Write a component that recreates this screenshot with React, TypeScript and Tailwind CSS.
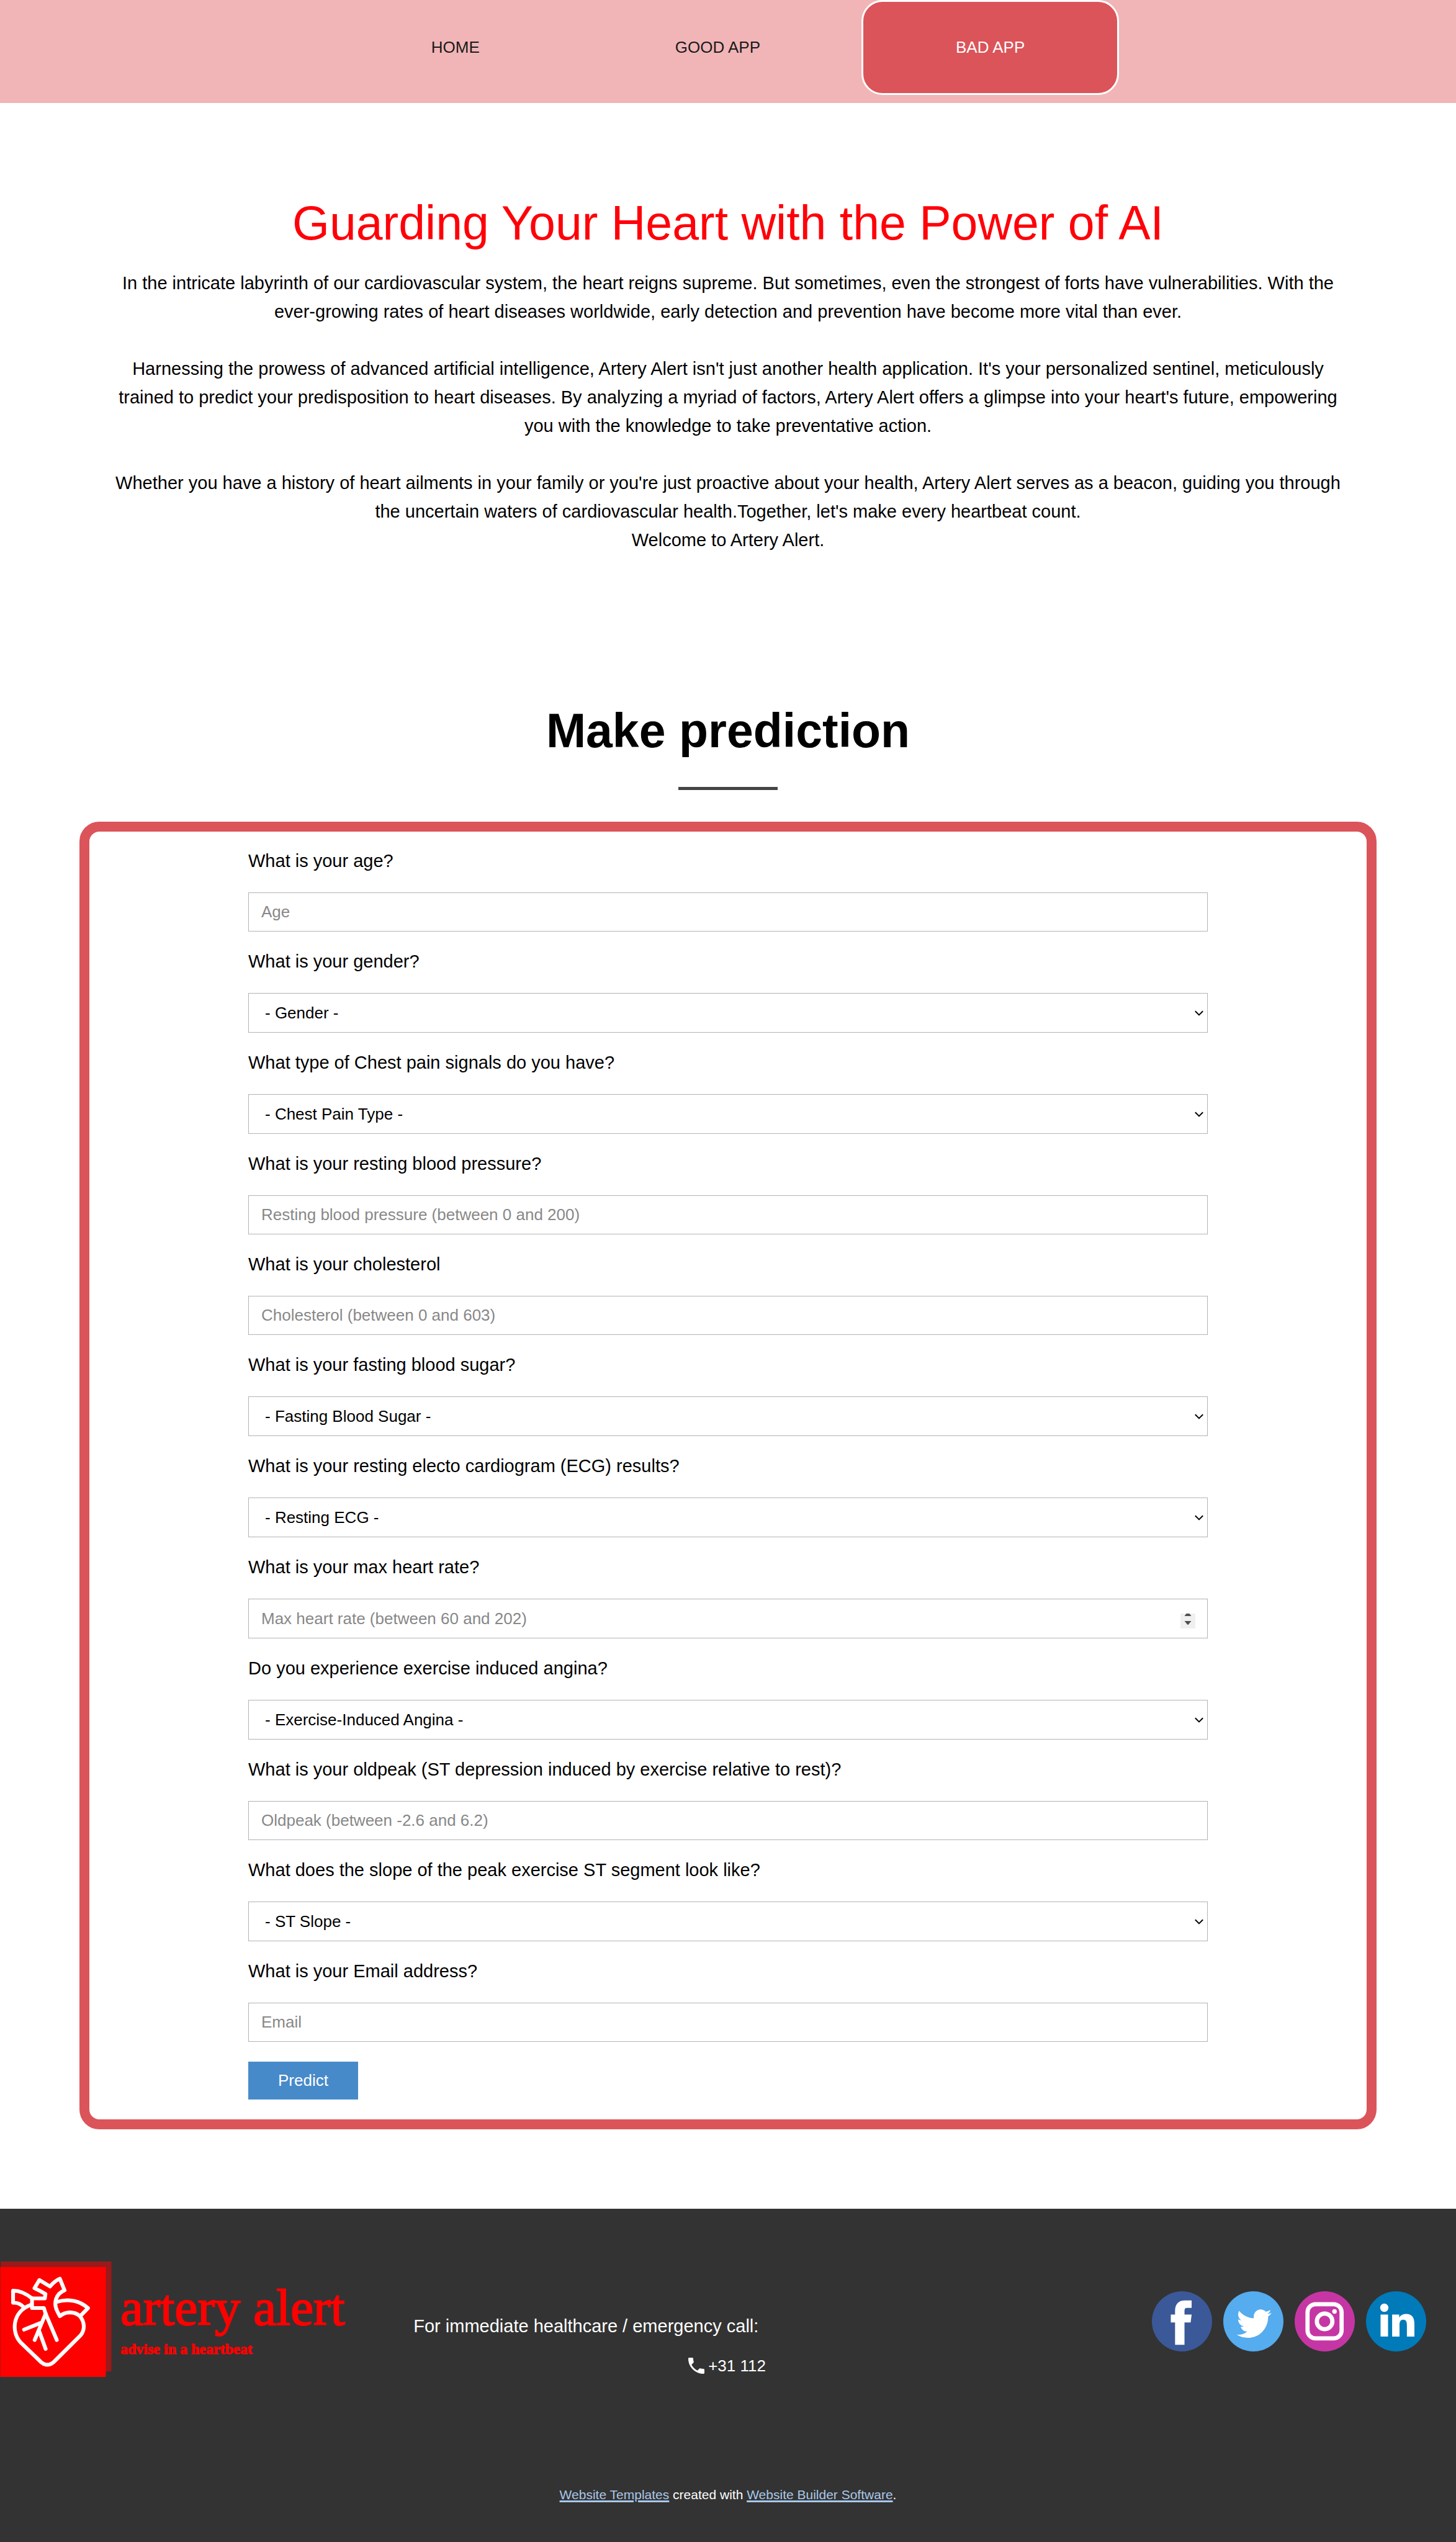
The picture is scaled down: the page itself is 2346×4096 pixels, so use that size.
import { Fragment } from "react";

type Field = {
  id: string;
  label: string;
  kind: "text" | "number" | "email" | "select";
  hint: string;
  options?: string[];
};

const fields: Field[] = [
  { id: "age", label: "What is your age?", kind: "text", hint: "Age" },
  { id: "gender", label: "What is your gender?", kind: "select", hint: "- Gender -", options: ["Male", "Female"] },
  {
    id: "chest-pain",
    label: "What type of Chest pain signals do you have?",
    kind: "select",
    hint: "- Chest Pain Type -",
    options: ["Typical Angina", "Atypical Angina", "Non-Anginal Pain", "Asymptomatic"],
  },
  {
    id: "blood-pressure",
    label: "What is your resting blood pressure?",
    kind: "text",
    hint: "Resting blood pressure (between 0 and 200)",
  },
  { id: "cholesterol", label: "What is your cholesterol", kind: "text", hint: "Cholesterol (between 0 and 603)" },
  {
    id: "blood-sugar",
    label: "What is your fasting blood sugar?",
    kind: "select",
    hint: "- Fasting Blood Sugar -",
    options: ["Above 120 mg/dl", "Below 120 mg/dl"],
  },
  {
    id: "resting-ecg",
    label: "What is your resting electo cardiogram (ECG) results?",
    kind: "select",
    hint: "- Resting ECG -",
    options: ["Normal", "ST", "LVH"],
  },
  { id: "max-hr", label: "What is your max heart rate?", kind: "number", hint: "Max heart rate (between 60 and 202)" },
  {
    id: "angina",
    label: "Do you experience exercise induced angina?",
    kind: "select",
    hint: "- Exercise-Induced Angina -",
    options: ["Yes", "No"],
  },
  {
    id: "oldpeak",
    label: "What is your oldpeak (ST depression induced by exercise relative to rest)?",
    kind: "text",
    hint: "Oldpeak (between -2.6 and 6.2)",
  },
  {
    id: "st-slope",
    label: "What does the slope of the peak exercise ST segment look like?",
    kind: "select",
    hint: "- ST Slope -",
    options: ["Up", "Flat", "Down"],
  },
  { id: "email", label: "What is your Email address?", kind: "email", hint: "Email" },
];

const navItems = [
  { label: "HOME", active: false },
  { label: "GOOD APP", active: false },
  { label: "BAD APP", active: true },
];

const paragraphs = [
  ["In the intricate labyrinth of our cardiovascular system, the heart reigns supreme. But sometimes, even the strongest of forts have vulnerabilities. With the ever-growing rates of heart diseases worldwide, early detection and prevention have become more vital than ever."],
  ["Harnessing the prowess of advanced artificial intelligence, Artery Alert isn't just another health application. It's your personalized sentinel, meticulously trained to predict your predisposition to heart diseases. By analyzing a myriad of factors, Artery Alert offers a glimpse into your heart's future, empowering you with the knowledge to take preventative action."],
  [
    "Whether you have a history of heart ailments in your family or you're just proactive about your health, Artery Alert serves as a beacon, guiding you through the uncertain waters of cardiovascular health.Together, let's make every heartbeat count.",
    "Welcome to Artery Alert.",
  ],
];

function NavBar() {
  return (
    <header className="bg-[#f1b5b7] pb-[13px]">
      <nav className="flex justify-center gap-[11px]">
        {navItems.map((item) => (
          <a
            key={item.label}
            href="#"
            className={
              item.active
                ? "flex h-[153px] items-center rounded-[34px] border-[3px] border-white bg-[#db545a] px-[149px] text-[26px] text-white"
                : "flex h-[153px] items-center border-[3px] border-transparent px-[149px] text-[26px] text-[#1a1a1a]"
            }
          >
            {item.label}
          </a>
        ))}
      </nav>
    </header>
  );
}

function FieldControl({ field }: { field: Field }) {
  if (field.kind === "select") {
    return (
      <div className="relative">
        <select
          id={field.id}
          defaultValue=""
          className="block h-16 w-full appearance-none rounded-none border border-[#b3b3b3] bg-white pr-12 pl-[26px] text-[26px] text-black"
        >
          <option value="">{field.hint}</option>
          {field.options?.map((o) => (
            <option key={o} value={o}>
              {o}
            </option>
          ))}
        </select>
        <svg
          viewBox="0 0 14 9"
          className="pointer-events-none absolute top-[28px] right-[7px] h-[9px] w-[14px]"
          fill="none"
          stroke="#000"
          strokeWidth="2"
        >
          <path d="M0.8 1.2 L7 7.4 L13.2 1.2" />
        </svg>
      </div>
    );
  }
  if (field.kind === "number") {
    return (
      <div className="relative">
        <input
          id={field.id}
          type="number"
          placeholder={field.hint}
          className="block h-16 w-full border border-[#b3b3b3] bg-white px-5 text-[26px] text-black [appearance:textfield] placeholder:text-[#888888] [&::-webkit-inner-spin-button]:appearance-none"
        />
        <svg viewBox="0 0 24 24" className="pointer-events-none absolute top-[24px] right-[20px] size-6">
          <rect width="24" height="24" fill="#f0f0f0" />
          <path d="M9.5 0 H14.5 L17.5 4 H6.5 Z" fill="#505050" />
          <path d="M6.5 12 H17.5 L12.5 18 H11.5 Z" fill="#505050" />
        </svg>
      </div>
    );
  }
  return (
    <input
      id={field.id}
      type={field.kind}
      placeholder={field.hint}
      className="block h-[63px] w-full border border-[#b3b3b3] bg-white px-5 text-[26px] text-black placeholder:text-[#888888]"
    />
  );
}

function PredictionForm() {
  return (
    <form
      className="mx-32 rounded-[32px] border-[16px] border-[#db545a] px-64 pt-6 pb-8"
      onSubmit={(e) => e.preventDefault()}
    >
      <div className="flex flex-col gap-[25px]">
        {fields.map((field) => (
          <div key={field.id} className="flex flex-col gap-7">
            <label htmlFor={field.id} className="text-[29px] leading-[46px]">
              {field.label}
            </label>
            <FieldControl field={field} />
          </div>
        ))}
      </div>
      <button type="submit" className="mt-8 h-[61px] bg-[#478ac9] px-12 text-[26px] text-white">
        Predict
      </button>
    </form>
  );
}

function HeartLogo() {
  return (
    <svg viewBox="0 24 588 610" className="h-[186px] w-[180px] shrink-0">
      <rect x="3" y="24" width="585" height="581" fill="#991a1a" />
      <rect x="0" y="53" width="558" height="581" fill="#ff0000" />
      <g fill="none" stroke="#fff" strokeWidth="20" strokeLinecap="round" strokeLinejoin="round">
        <path d="M168 219 H236 L239 196 Q210 178 181 165 L207 122 L263 156 Q286 128 315 115 L340 176 C296 194 278 240 302 288 L315 313 C345 287 392 287 420 312 C448 345 448 385 425 414 L291 547 C266 577 232 577 207 547 L108 452 C58 400 62 290 160 254" />
        <path d="M302 237 C360 219 420 232 464 270 L428 307" />
        <path d="M168 219 C140 196 110 178 68 178 V242 C90 241 106 247 121 262" />
        <path d="M168 219 V270 H231 L240 300 L299 439" />
        <path d="M240 300 L182 439" />
        <path d="M126 384 L213 349" />
        <path d="M206 392 L240 486" />
      </g>
    </svg>
  );
}

function SocialLinks() {
  return (
    <div className="mt-12 mr-12 ml-auto flex gap-[18px]">
      <a href="#" aria-label="Facebook">
        <svg viewBox="0 0 106 106" className="size-[97px]">
          <circle cx="53" cy="53" r="53" fill="#3b5998" />
          <path
            fill="#fff"
            d="M70 16 V29.3 H62 Q57.4 29.3 57.4 34 V41 H70 L68.2 55 H57.4 V94.3 H40.8 V55 H33.3 V41 H40.8 V34 C40.8 22.5 47 16 58 16 Z"
          />
        </svg>
      </a>
      <a href="#" aria-label="Twitter">
        <svg viewBox="0 0 106 106" className="size-[97px]">
          <circle cx="53" cy="53" r="53" fill="#55acee" />
          <path
            fill="#fff"
            transform="translate(23.7 26.2) scale(2.5625)"
            d="M23.953 4.57a10 10 0 01-2.825.775 4.958 4.958 0 002.163-2.723c-.951.555-2.005.959-3.127 1.184a4.92 4.92 0 00-8.384 4.482C7.69 8.095 4.067 6.13 1.64 3.162a4.822 4.822 0 00-.666 2.475c0 1.71.87 3.213 2.188 4.096a4.904 4.904 0 01-2.228-.616v.06a4.923 4.923 0 003.946 4.827 4.996 4.996 0 01-2.212.085 4.936 4.936 0 004.604 3.417 9.867 9.867 0 01-6.102 2.105c-.39 0-.779-.023-1.17-.067a13.995 13.995 0 007.557 2.209c9.053 0 13.998-7.496 13.998-13.985 0-.21 0-.42-.015-.63A9.935 9.935 0 0024 4.59z"
          />
        </svg>
      </a>
      <a href="#" aria-label="Instagram">
        <svg viewBox="0 0 106 106" className="size-[97px]">
          <circle cx="53" cy="53" r="53" fill="#c536a4" />
          <g fill="none" stroke="#fff" strokeWidth="7.4">
            <rect x="22.7" y="22.7" width="60" height="60.3" rx="14" />
            <circle cx="52.8" cy="53" r="13.7" />
          </g>
          <circle cx="70.2" cy="35.5" r="4" fill="#fff" />
        </svg>
      </a>
      <a href="#" aria-label="LinkedIn">
        <svg viewBox="0 0 106 106" className="size-[97px]">
          <circle cx="53" cy="53" r="53" fill="#007ab9" />
          <g fill="#fff">
            <circle cx="32.2" cy="29" r="7.3" />
            <rect x="25.6" y="41" width="13.2" height="38.7" />
            <path d="M46 41 H58.4 V46.3 Q62 40 71 40 C81 40 85.2 47 85.2 57 V79.7 H72 V61 C72 54 71 50 65.5 50 C60 50 59 54.5 59 60 V79.7 H46 Z" />
          </g>
        </svg>
      </a>
    </div>
  );
}

function Footer() {
  return (
    <footer className="mt-32 bg-[#333333] pt-[85px] pb-[60px] text-white">
      <div className="flex items-start">
        <a href="#" className="flex w-[28.4%] shrink-0 font-['Liberation_Serif',serif] text-[#ff0000]">
          <HeartLogo />
          <span className="mt-[26px] ml-[14px] flex flex-col gap-[3px] whitespace-nowrap">
            <span className="text-[83px] leading-[96px] [-webkit-text-stroke:2px_#ff0000]">artery alert</span>
            <span className="text-[24px] leading-8 font-bold [-webkit-text-stroke:1px_#ff0000]">
              advise in a heartbeat
            </span>
          </span>
        </a>
        <div className="mt-[81px] w-[24.2%] shrink-0">
          <p className="text-[29px] leading-[46px]">For immediate healthcare / emergency call:</p>
          <p className="mt-5 flex items-center justify-end gap-[6px] text-[26px] leading-[42px]">
            <svg viewBox="3 3 18 18" className="size-[26px]" fill="#fff">
              <path d="M6.62 10.79c1.44 2.83 3.76 5.14 6.59 6.59l2.2-2.2c.27-.27.67-.36 1.02-.24 1.12.37 2.33.57 3.57.57.55 0 1 .45 1 1V20c0 .55-.45 1-1 1-9.39 0-17-7.61-17-17 0-.55.45-1 1-1h3.5c.55 0 1 .45 1 1 0 1.25.2 2.45.57 3.57.11.35.03.74-.25 1.02l-2.2 2.2z" />
            </svg>
            +31 112
          </p>
        </div>
        <SocialLinks />
      </div>
      <p className="mt-[170px] text-center text-[21px] leading-[34px]">
        <a href="#" className="text-[#a9c8e9] underline decoration-[3px]">
          Website Templates
        </a>{" "}
        created with{" "}
        <a href="#" className="text-[#a9c8e9] underline decoration-[3px]">
          Website Builder Software
        </a>
        .
      </p>
    </footer>
  );
}

export default function App() {
  return (
    <div className="min-h-screen bg-white font-['Liberation_Sans',sans-serif] text-black">
      <NavBar />
      <main>
        <section className="pt-[147px] text-center">
          <h1 className="text-[77px] leading-[92px] text-[#ff0009]">Guarding Your Heart with the Power of AI</h1>
          <p className="mx-auto mt-7 w-[85%] text-[29px] leading-[46px]">
            {paragraphs.map((lines, i) => (
              <Fragment key={i}>
                {i > 0 && (
                  <>
                    <br />
                    <br />
                  </>
                )}
                {lines.map((line, j) => (
                  <Fragment key={j}>
                    {j > 0 && <br />}
                    {line}
                  </Fragment>
                ))}
              </Fragment>
            ))}
          </p>
        </section>
        <section className="pt-[238px]">
          <h2 className="text-center text-[77px] leading-[92px] font-bold">Make prediction</h2>
          <div className="mx-auto mt-[45px] mb-[51px] h-[5px] w-40 bg-[#444444]" />
          <PredictionForm />
        </section>
      </main>
      <Footer />
    </div>
  );
}
